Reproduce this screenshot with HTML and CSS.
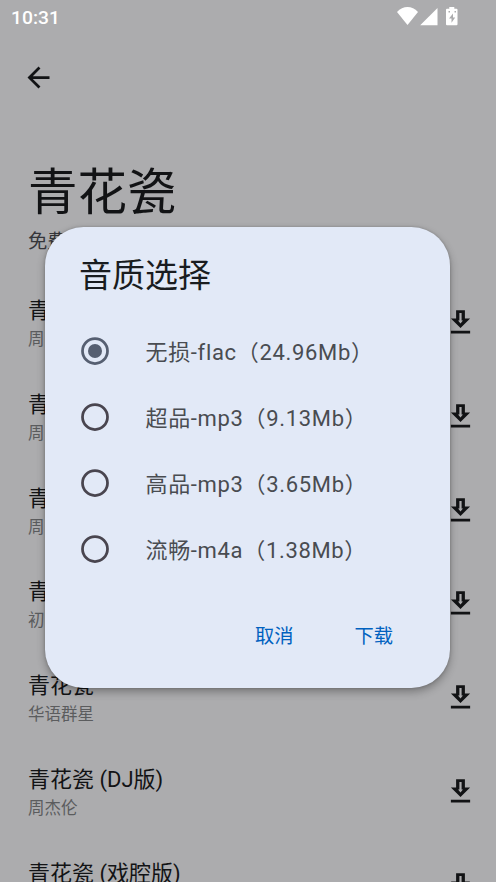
FILE: index.html
```html
<!DOCTYPE html>
<html lang="zh-CN">
<head>
<meta charset="utf-8">
<title>青花瓷</title>
<link rel="stylesheet" href="styles.css">
</head>
<body>
<svg class="defs" aria-hidden="true">
  <symbol id="download" viewBox="0 0 24 24"><path fill-rule="evenodd" d="M19 9h-3.800V3H8.800v6H5l7 7zM11.200 5h1.600v5.600h1L12 12.700l-1.800-2.100h1zM5 18h14v2H5z"/></symbol>
</svg>
<div class="screen">
  <header class="status">
    <span class="clock">10:31</span>
    <svg class="status-icons" viewBox="0 0 62 20" width="62" height="20">
      <path d="M10.500 19 0 6C6-.8 15-.8 21 6z"/>
      <path d="M40.500 2v17.200H23.200z"/>
      <path fill-rule="evenodd" d="M52.300 1h5v1.700h2.200q1 0 1 1v14.500q0 1-1 1h-9.500q-1 0-1-1v-14.500q0-1 1-1h2.300zM56 7.500l-4 5h2.500v4.300l3.700-5.300h-2.200zM51.500 5v1.500h1.500v-1.500zM57.500 5v1.500h1.500v-1.500z"/>
    </svg>
  </header>
  <nav class="toolbar">
    <svg class="icon" viewBox="0 0 24 24"><path d="M20 11H7.830l5.590-5.590L12 4l-8 8 8 8 1.410-1.410L7.830 13H20z"/></svg>
  </nav>
  <h1 class="heading">青花瓷</h1>
  <p class="subtitle">免费</p>
  <main class="list">
    <div class="row"><div><div class="song">青花瓷</div><div class="artist">周杰伦</div></div><svg class="icon"><use href="#download"/></svg></div>
    <div class="row"><div><div class="song">青花瓷</div><div class="artist">周杰伦</div></div><svg class="icon"><use href="#download"/></svg></div>
    <div class="row"><div><div class="song">青花瓷</div><div class="artist">周杰伦</div></div><svg class="icon"><use href="#download"/></svg></div>
    <div class="row"><div><div class="song">青花瓷</div><div class="artist">初</div></div><svg class="icon"><use href="#download"/></svg></div>
    <div class="row"><div><div class="song">青花瓷</div><div class="artist">华语群星</div></div><svg class="icon"><use href="#download"/></svg></div>
    <div class="row"><div><div class="song">青花瓷 (DJ版)</div><div class="artist">周杰伦</div></div><svg class="icon"><use href="#download"/></svg></div>
    <div class="row"><div><div class="song">青花瓷 (戏腔版)</div></div><svg class="icon"><use href="#download"/></svg></div>
  </main>
  <section class="dialog" role="dialog">
    <h2 class="dialog-title">音质选择</h2>
    <div class="options">
      <div class="option"><svg class="radio checked" viewBox="0 0 28 28"><circle cx="14" cy="14" r="12.500"/><circle class="dot" cx="14" cy="14" r="7"/></svg><span>无损-flac（24.96Mb）</span></div>
      <div class="option"><svg class="radio" viewBox="0 0 28 28"><circle cx="14" cy="14" r="12.500"/></svg><span>超品-mp3（9.13Mb）</span></div>
      <div class="option"><svg class="radio" viewBox="0 0 28 28"><circle cx="14" cy="14" r="12.500"/></svg><span>高品-mp3（3.65Mb）</span></div>
      <div class="option"><svg class="radio" viewBox="0 0 28 28"><circle cx="14" cy="14" r="12.500"/></svg><span>流畅-m4a（1.38Mb）</span></div>
    </div>
    <div class="actions"><span>取消</span><span>下载</span></div>
  </section>
</div>
</body>
</html>
```
FILE: styles.css
```css
* { box-sizing: border-box; }
body, h1, h2, p { margin: 0; }
body {
  background: #acacae;
  color: #121315;
  font-family: Roboto, "Noto Sans CJK SC", sans-serif;
  overflow: hidden;
}
.defs { position: absolute; width: 0; height: 0; }
.screen { position: relative; width: 496px; height: 882px; overflow: hidden; }
.status {
  display: flex;
  justify-content: space-between;
  align-items: center;
  height: 34px;
  padding: 0 37px 0 11px;
}
.clock { color: #fff; font-size: 19.250px; font-weight: 500; line-height: 34px; padding-top: 2px; }
.status-icons { fill: #fff; margin-bottom: 2px; }
.toolbar { display: flex; align-items: center; height: 86px; padding-left: 22px; }
.icon { display: block; width: 33px; height: 33px; fill: currentColor; flex: none; }
.heading {
  margin-top: 38px;
  padding-left: 28px;
  font-size: 49.500px;
  font-weight: 400;
  line-height: 70px;
}
.subtitle { padding-left: 28px; margin-top: -1px; font-size: 19.250px; line-height: 30px; color: #35363a; }
.list { margin-top: 16px; }
.row {
  display: flex;
  justify-content: space-between;
  height: 93.750px;
  padding: 21px 19.500px 0 28px;
}
.row .icon { margin-top: 12px; }
.song { margin-top: 2px; font-size: 22px; line-height: 30px; }
.artist { font-size: 16.500px; line-height: 25px; color: #5b5c5e; margin-top: 1px; }
.dialog {
  position: absolute;
  left: 45px;
  top: 227px;
  width: 405.400px;
  height: 460.500px;
  padding: 27px 34px 0;
  border-radius: 38.500px;
  background: #e2e9f7;
  box-shadow: 0 4px 9px rgba(0, 0, 0, .3), 0 0 3px rgba(0, 0, 0, .2);
}
.dialog-title { font-size: 33px; font-weight: 400; line-height: 44px; color: #191c20; }
.options { margin-top: 20px; }
.option {
  display: flex;
  align-items: center;
  gap: 36.500px;
  height: 66.100px;
  padding-left: 2px;
  font-size: 22px;
  letter-spacing: .67px;
  color: #494c51;
}
.option span { margin-top: -2px; }
.radio { width: 28px; height: 28px; fill: none; stroke: #49454f; stroke-width: 2.750; flex: none; }
.checked { stroke: #565f71; }
.dot { fill: #565f71; stroke: none; }
.actions {
  display: flex;
  justify-content: flex-end;
  gap: 61px;
  margin-top: 40px;
  padding-right: 23.500px;
  font-size: 19.250px;
  line-height: 30px;
  color: #0061bf;
}
```
